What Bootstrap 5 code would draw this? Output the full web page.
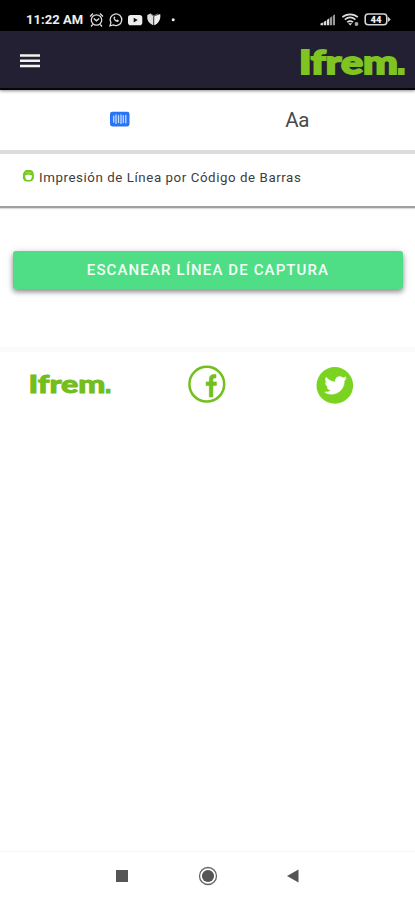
<!DOCTYPE html>
<html lang="es">
<head>
<meta charset="utf-8">
<meta name="viewport" content="width=device-width, initial-scale=1">
<title>Ifrem</title>
<link href="https://cdn.jsdelivr.net/npm/bootstrap@5.3.0/dist/css/bootstrap.min.css" rel="stylesheet">
<style>
body{font-family:Roboto,"Liberation Sans",sans-serif;background:#fff;height:900px;overflow:hidden}
svg{display:block;flex:none}
.brand{overflow:visible;font-family:Lato,sans-serif;font-weight:900}
.brand .dot{font-family:"Liberation Sans",sans-serif;font-weight:700}
.statusbar{height:31px;background:#000;padding:8px 24px 0 26px;color:#eee}
.clock{font-size:13px;line-height:23px;font-weight:700;letter-spacing:.05px;width:58px;white-space:nowrap}
.appbar{height:59px;background:#242033;border-bottom:2px solid #050409;padding:0 9px 0 20px;box-shadow:0 1px 3px rgba(0,0,0,.45);position:relative}
.menu-btn{padding:0;border:0;background:none}
.tabs{height:64px;border-bottom:4px solid #dcdcdc;padding-bottom:1px}
.tab-code{margin-bottom:2px}
.tab-aa{font-size:20.5px;line-height:24px;color:#484848;letter-spacing:-.3px;margin-right:4px}
.notice{height:54px;border-bottom:2px solid #a0a0a0;box-shadow:0 1px 1px #ddd;padding:15px 22px 0;color:#3d3d3d;font-size:13.3px;line-height:16px}
.notice-text{letter-spacing:.57px;white-space:nowrap;padding-top:1px;margin-left:4px}
.scan{margin:43px 12px 0 13px;height:38px;background:#4fdd86;color:#f4fff7;border:0;border-radius:3px;font-size:15px;font-weight:500;letter-spacing:1.12px;line-height:36px;padding:0;box-shadow:0 3px 5px rgba(0,0,0,.38),0 1px 9px rgba(0,0,0,.14)}
.links{margin-top:58px;border-top:5px solid #fafafa;height:76px;padding:13px 62px 0 29px}
.fb{margin-right:15px}
.sysnav{height:49px;border-top:1px solid #f5f5f5;padding:0 115px 0 116px}
</style>
<script src="https://cdn.jsdelivr.net/npm/bootstrap@5.3.0/dist/js/bootstrap.bundle.min.js"></script>
</head>
<body class="d-flex flex-column">
<div class="statusbar d-flex align-items-start">
  <span class="clock">11:22 AM</span>
  <svg width="94" height="23" viewBox="84 8 94 23" fill="none" stroke="#ddd" stroke-width="1.3">
    <circle cx="96.500" cy="20" r="5.2"/><path d="M90 16.500l3-3M103 16.500l-3-3M93.800 18.500l2.600 2.300 2.800-2.300M92.700 24.500L91 26.500M100.300 24.500l1.700 2"/>
    <path d="M110 25.800l.9-3.200a5.800 5.800 0 1 1 2.400 2.300z"/><path d="M113.600 17.200c-.4 2.500 2.200 5.200 4.800 4.600l.4-1.500-1.700-.8-.9.8-1.600-1.700.7-.9-.7-1.400z" fill="#ddd" stroke="none"/>
    <rect x="128" y="15" width="14.300" height="10.200" rx="2.800" fill="#eee" stroke="none"/><path d="M133.700 17.800l4 2.300-4 2.300z" fill="#111" stroke="none"/>
    <path d="M147.300 15l3.300-1.600 2.800 2v9.800c-3.400-1.200-5.900-4-6.100-7z" fill="#ddd" stroke="none"/><path d="M154.200 16.200l6-2.300c.8 5.200-1.400 9.300-6 11.400z" fill="#eee" stroke="none"/><path d="M150.500 14l3.300 2.200 4-2.400" stroke="#888" stroke-width="1"/>
    <circle cx="173.200" cy="19.700" r="1.500" fill="#eee" stroke="none"/>
  </svg>
  <svg class="ms-auto" width="72" height="23" viewBox="319 8 72 23">
    <path d="M320.500 25.300v-1.800l2.500-.9v2.700zM323.700 25.300v-3.200l2.500-1.500v4.700zM326.900 25.300V20l2.400-1.800v7.100z" fill="#ddd"/><path d="M330 25.300v-7.600l2-1.400v9zM332.800 25.300v-9.500l2.200-1.500v11z" fill="#999"/>
    <g fill="none" stroke="#ddd" stroke-width="1.700"><path d="M342.400 17.200c4.200-3.800 11.200-3.800 15.400 0M344.800 19.700c3.200-2.700 7.400-2.700 10.600 0M347.200 22.200c1.700-1.400 4.100-1.400 5.800 0"/></g><path d="M348.200 23.200h4l-2 2.300z" fill="#ddd"/><circle cx="356.500" cy="24" r="1.900" fill="#aaa"/>
    <rect x="365.200" y="14" width="21.600" height="10.800" rx="3" fill="none" stroke="#d5d5d5" stroke-width="1.600"/><path d="M388 16.700l2.700 2.700-2.700 2.700z" fill="#d5d5d5"/>
    <text x="376" y="22.900" text-anchor="middle" font-family="Roboto,sans-serif" font-weight="900" font-size="9.500" fill="#eee">44</text>
  </svg>
</div>
<header class="appbar d-flex align-items-center justify-content-between">
  <button class="menu-btn" type="button" aria-label="Menu"><svg width="21" height="16" viewBox="0 0 21 16" stroke="#f2f2ee" stroke-width="2.500"><path d="M0 3.400h20M0 8.800h20M0 14.100h20"/></svg></button>
  <svg class="brand" width="107" height="40" viewBox="299 40 107 40" fill="#7fc421" stroke="#7fc421" stroke-width="1.800"><text x="299" y="73.500" textLength="99" lengthAdjust="spacingAndGlyphs" font-size="32.500">Ifrem</text><text class="dot" x="396.500" y="73.500" font-size="34">.</text></svg>
</header>
<nav class="tabs row g-0">
  <div class="col d-flex justify-content-center align-items-center ps-4">
    <svg width="20" height="16" viewBox="0 0 20 16" class="tab-code ms-2"><rect y=".8" width="19.500" height="14.600" rx="2.300" fill="#2874f5"/><path d="M3.700 5.100v6M6 3.800v8.600M8.500 4.700v6.800M11 3.800v8.600M13.300 4.700v6.800M15.800 4.300v7.600" stroke="#c2dcff" stroke-width="1.300" stroke-linecap="round"/></svg>
  </div>
  <div class="col d-flex justify-content-center align-items-center pe-4"><span class="tab-aa">Aa</span></div>
</nav>
<section class="notice d-flex align-items-start">
  <svg width="13" height="14" viewBox="0 0 13 14"><path d="M2.200 2.500L4 1h5l2 1.600.8 2.300v4.700l-1.600 2.100-2 .9H4.400l-2.200-1L.9 9.200V5z" fill="#73c81c"/><path d="M3 6.600c1.700-1.200 5.300-1.200 7 0l-.7 3.500-1.500 1H5.200l-1.500-1z" fill="#fff"/><path d="M3.600 3.900h5.700" stroke="#a6e45e"/></svg>
  <span class="notice-text">Impresión de Línea por Código de Barras</span>
</section>
<button type="button" class="scan btn flex-shrink-0">ESCANEAR LÍNEA DE CAPTURA</button>
<footer class="links d-flex justify-content-between align-items-start flex-shrink-0">
  <svg class="brand" width="84" height="38" viewBox="29 365 84 38" fill="#73bd1c" stroke="#73bd1c" stroke-width=".9"><text x="28.500" y="393" textLength="77" lengthAdjust="spacingAndGlyphs" font-size="25">Ifrem</text><text class="dot" x="104.500" y="393" font-size="26">.</text></svg>
  <svg class="fb" width="38" height="39" viewBox="188 365 38 39"><circle cx="206.800" cy="384.200" r="17.400" fill="none" stroke="#73bf1d" stroke-width="2.500"/><path d="M209.300 397v-11.400h-3.200v-3.700h3.200v-2.600c0-3.800 2.300-5.400 6.700-4.700v3.400c-2.100-.2-3.100.2-3.100 2v1.900h3.500v3.700h-3.500V397z" fill="#73bf1d" stroke="#73bf1d" stroke-width=".6"/></svg>
  <svg width="37" height="39" viewBox="316 365 37 39"><circle cx="334.800" cy="385.400" r="18.300" fill="#7ad320"/><g transform="translate(323.900 374.200) scale(.95)"><path d="M23.600 4.600c-.8.4-1.700.6-2.600.7.9-.6 1.600-1.400 2-2.500-.9.5-1.900.9-2.900 1.100a4.700 4.700 0 0 0-8 4.300C8.200 8 4.700 6.100 2.400 3.200c-1.300 2.200-.6 4.900 1.400 6.300-.8 0-1.500-.3-2.100-.6 0 2.300 1.600 4.200 3.800 4.700-.7.2-1.400.2-2.100.1.600 1.900 2.300 3.200 4.400 3.200A9.400 9.400 0 0 1 .9 18.900c2.100 1.400 4.600 2.100 7.200 2.100 8.800 0 13.600-7.300 13.300-14 .9-.6 1.600-1.400 2.200-2.400z" fill="#fff" stroke="#fff" stroke-width=".6"/></g></svg>
</footer>
<nav class="sysnav mt-auto d-flex justify-content-between align-items-center flex-shrink-0">
  <svg width="13" height="22"><rect y="5" width="12" height="12" fill="#555"/></svg>
  <svg width="20" height="22" viewBox="0 0 20 22"><circle cx="10" cy="11" r="8.500" fill="none" stroke="#666" stroke-width="1.300"/><circle cx="10" cy="11" r="6.100" fill="#555"/></svg>
  <svg width="14" height="22"><path d="M1 11l11.500-6.500v13z" fill="#555"/></svg>
</nav>
</body>
</html>
